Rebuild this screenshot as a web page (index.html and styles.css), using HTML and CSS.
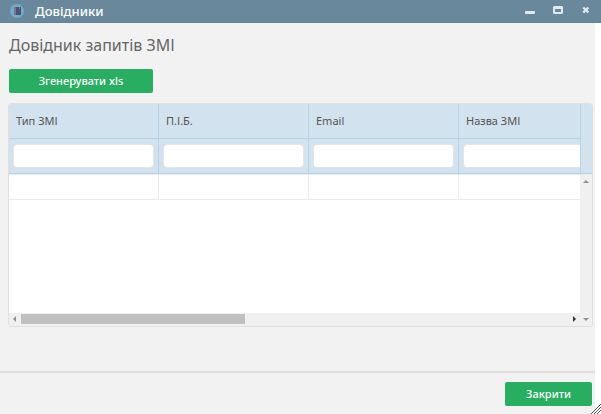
FILE: index.html
```html
<!DOCTYPE html>
<html lang="uk">
<head>
    <meta charset="UTF-8">
    <meta name="viewport" content="width=device-width, initial-scale=1.0">
    <title>Довідники</title>
    <link rel="stylesheet" href="styles.css">
</head>
<body>
    <header class="titlebar">
        <svg class="logo" viewBox="0 0 14 14">
            <circle cx="7" cy="7" r="7" fill="#6fabd0"/>
            <rect x="4" y="3" width="7" height="8" fill="#4a566f"/>
            <rect x="4" y="3" width="2" height="8" fill="#7f7483"/>
            <rect x="9" y="3" width="1" height="2" fill="#d9534f"/>
        </svg>
        <span class="titlebar-text">Довідники</span>
        <button class="win-btn" aria-label="Згорнути">
            <svg viewBox="0 0 10 10"><rect x="0" y="5" width="10" height="3" rx="1" fill="#dfeaf1"/></svg>
        </button>
        <button class="win-btn" aria-label="Розгорнути">
            <svg viewBox="0 0 10 10"><path d="M1 0h8l1 1v6l-1 1H1L0 7V1zM2 3v3h6V3z" fill="#dfeaf1" fill-rule="evenodd"/></svg>
        </button>
        <button class="win-btn" aria-label="Закрити вікно">
            <svg viewBox="0 0 10 10"><path d="M2.3 1.5l5 5M7.3 1.5l-5 5" stroke="#dfeaf1" stroke-width="2.4"/></svg>
        </button>
    </header>

    <main class="content">
        <h1>Довідник запитів ЗМІ</h1>
        <button class="btn btn-export">Згенерувати xls</button>

        <div class="grid">
            <div class="grid-view">
                <table>
                    <thead>
                        <tr class="names">
                            <th>Тип ЗМІ</th>
                            <th>П.І.Б.</th>
                            <th>Email</th>
                            <th>Назва ЗМІ</th>
                        </tr>
                        <tr class="filters">
                            <th><input type="text" aria-label="Тип ЗМІ"></th>
                            <th><input type="text" aria-label="П.І.Б."></th>
                            <th><input type="text" aria-label="Email"></th>
                            <th><input type="text" aria-label="Назва ЗМІ"></th>
                        </tr>
                    </thead>
                    <tbody>
                        <tr>
                            <td></td>
                            <td></td>
                            <td></td>
                            <td></td>
                        </tr>
                    </tbody>
                </table>
            </div>
            <div class="grid-side">
                <div class="side-head"></div>
                <div class="scroll-y">
                    <svg class="arrow" viewBox="0 0 12 12"><path d="M3 8l3-3 3 3z" fill="#8f8f8f"/></svg>
                </div>
            </div>
            <div class="scroll-x">
                <svg class="arrow" viewBox="0 0 12 12"><path d="M7 3L4 6l3 3z" fill="#8f8f8f"/></svg>
                <div class="track"><div class="thumb"></div></div>
                <svg class="arrow" viewBox="0 0 12 12"><path d="M5 3l3 3-3 3z" fill="#333"/></svg>
                <svg class="arrow" viewBox="0 0 12 12"><path d="M3 5l3 3 3-3z" fill="#8f8f8f"/></svg>
            </div>
        </div>
    </main>

    <footer class="footer">
        <button class="btn btn-close">Закрити</button>
    </footer>
    <svg class="resizer" viewBox="0 0 10 10">
        <path d="M0 10L10 0M3 10l7-7M6 10l4-4" stroke="#555" stroke-width="1"/>
    </svg>
</body>
</html>
```
FILE: styles.css
```css
* {
    box-sizing: border-box;
}

body {
    margin: 0;
    min-height: 100vh;
    display: flex;
    flex-direction: column;
    background: #fff;
    color: #555;
    font-family: "Noto Sans", "Open Sans", sans-serif;
    font-size: 11px;
}

button {
    border: none;
    padding: 0;
    font-family: inherit;
    cursor: pointer;
}

/* window bar */
.titlebar {
    display: flex;
    align-items: center;
    height: 23px;
    padding: 0 10px;
    gap: 18px;
    background: #69889c;
    border-bottom: 1px solid #5f8298;
    color: #fff;
}

.logo {
    width: 14px;
    height: 14px;
    margin-right: -7px;
}

.titlebar-text {
    flex: 1;
    font-size: 13px;
    font-weight: 500;
    line-height: 22px;
}

.win-btn {
    display: flex;
    background: none;
}

.win-btn svg {
    width: 10px;
    height: 10px;
}

/* page */
.content {
    flex: 1;
    display: flex;
    flex-direction: column;
    align-items: flex-start;
    margin-right: 6px;
    padding: 10px 2px 44px 8px;
    background: #f2f2f2;
}

h1 {
    margin: 0 0 12px 1px;
    font-size: 16px;
    font-weight: 400;
    line-height: 24px;
    color: #666;
}

.btn {
    height: 24px;
    border-radius: 2px;
    background: #27ae60;
    color: #fff;
    font-size: 11px;
    font-weight: 500;
    line-height: 24px;
}

.btn-export {
    width: 144px;
    margin: 0 0 10px 1px;
}

.btn-close {
    width: 87px;
}

/* table */
.grid {
    flex: 1;
    align-self: stretch;
    display: grid;
    grid-template-columns: 1fr 12px;
    grid-template-rows: 1fr 13px;
    border: 1px solid #e0e0e0;
    border-radius: 3px;
    background: #fff;
    overflow: hidden;
}

.grid-view {
    overflow: hidden;
}

table {
    width: 100%;
    min-width: 600px;
    table-layout: fixed;
    border-collapse: separate;
    border-spacing: 0;
}

th {
    padding: 0 7px;
    background: #d2e2ee;
    border-right: 1px solid #b5d3e4;
    border-bottom: 1px solid #b5d3e4;
    font-weight: 400;
    text-align: left;
}

.names th {
    height: 35px;
    padding-bottom: 2px;
}

.filters th {
    height: 36px;
    padding: 0 4px 1px;
    border-bottom-color: #e2f0f8;
    box-shadow: inset 0 -1px #b5d3e4;
}

.filters input {
    display: block;
    width: 100%;
    height: 24px;
    border: 1px solid #e2e6e9;
    border-radius: 4px;
    background: #fff;
}

td {
    height: 25px;
    border-right: 1px solid #ececec;
    border-bottom: 1px solid #ececec;
}

.grid-side {
    display: flex;
    flex-direction: column;
}

.side-head {
    height: 71px;
    background: #d2e2ee;
    border-left: 1px solid #b5d3e4;
    border-bottom: 1px solid #e2f0f8;
    box-shadow: inset 0 -1px #b5d3e4;
}

.scroll-y {
    flex: 1;
    background: #f0f0f0;
}

.scroll-x {
    grid-column: 1 / 3;
    display: flex;
    background: #f0f0f0;
}

.arrow {
    display: block;
    width: 12px;
    height: 12px;
}

.track {
    flex: 1;
    padding: 1px 0;
}

.thumb {
    width: 41%;
    height: 10px;
    background: #c0c0c0;
}

/* bottom bar */
.footer {
    display: flex;
    justify-content: flex-end;
    margin-right: 6px;
    padding: 9px 3px 8px;
    border-top: 2px solid #dedede;
    background: #f2f2f2;
}

.resizer {
    position: fixed;
    right: 0;
    bottom: 0;
    width: 10px;
    height: 10px;
}
```
